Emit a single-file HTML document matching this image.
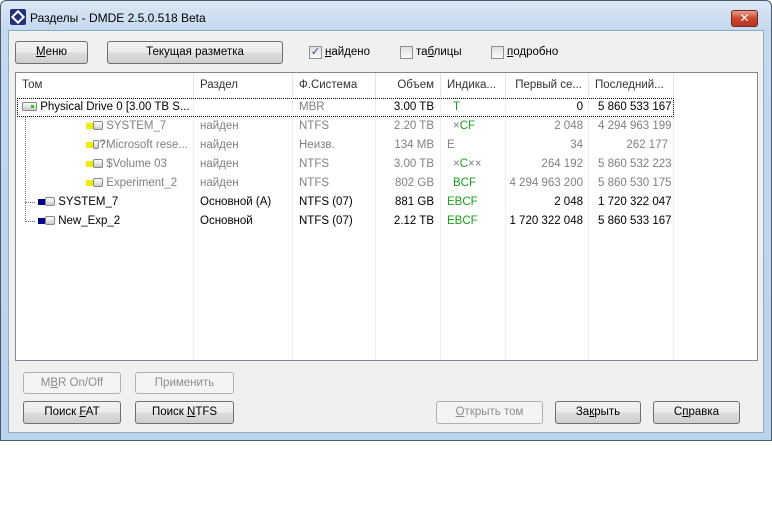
<!DOCTYPE html>
<html><head><meta charset="utf-8"><style>
*{box-sizing:border-box;margin:0;padding:0}
body{width:772px;height:518px;background:#fff;font-family:"Liberation Sans","DejaVu Sans",sans-serif;font-size:11.5px;position:relative;overflow:hidden}
.frame{position:absolute;left:0;top:0;width:772px;height:441px;background:linear-gradient(#dbe7f4,#c4d8ee 30px,#bcd3ec);border:1px solid #4a5a6c;border-radius:6px 6px 0 0}
.title{position:absolute;left:30px;top:11px;font-size:12px;color:#000}
.icon{position:absolute;left:10px;top:9px;width:16px;height:16px;background:#23307a;border-radius:2px}
.close{position:absolute;left:731px;top:10px;width:27px;height:17px;border:1px solid #6a2a22;border-radius:3px;background:linear-gradient(#e8a090,#c8452e 50%,#b83420);color:#fff;font-weight:bold;text-align:center;line-height:14px;font-size:12px}
.client{position:absolute;left:8px;top:30px;width:756px;height:403px;background:#f0f0f0;border:1px solid #8fa8c4}
.a{position:absolute}
.btn{position:absolute;height:23px;border:1px solid #707070;border-radius:3px;background:linear-gradient(#f2f2f2,#ebebeb 50%,#dddddd 51%,#cfcfcf);text-align:center;line-height:21px;font-size:11.5px;color:#000}
.btn.dis{border-color:#adb2b5;background:#f4f4f4;color:#8d8d8d}
.cb{position:absolute;width:13px;height:13px;border:1px solid #8e8f8f;background:linear-gradient(#e0e0e0,#fafafa)}
.list{position:absolute;left:15px;top:72px;width:743px;height:289px;background:#fff;border:1px solid #828790}
.hdr{position:absolute;top:0;height:25px;border-right:1px solid #e3e5e8;line-height:25px;padding:0 6px;color:#333}
.vl{position:absolute;top:25px;bottom:0;width:1px;background:#f0f0f0}
.c{position:absolute;white-space:nowrap;line-height:19px;height:19px}
.g{color:#808080}.gr{color:#18a018}
.r{text-align:right}
.drv{display:inline-block;width:15px;height:9px;border:1px solid #888;border-radius:2px;background:linear-gradient(#fff,#ccc);vertical-align:-1px;position:relative}
.sq{display:inline-block;width:7px;height:6px;vertical-align:0}
</style></head><body>
<div class="frame"></div>
<div class="icon"><div style="position:absolute;left:3px;top:3px;width:10px;height:10px;border:2px solid #fff;transform:rotate(45deg)"></div></div>
<div class="title">Разделы - DMDE 2.5.0.518 Beta</div>
<div class="close">✕</div>
<div class="client"></div>
<div class="btn" style="left:15px;top:41px;width:73px"><u>М</u>еню</div>
<div class="btn" style="left:107px;top:41px;width:176px">Текущая разметка</div>
<div class="cb" style="left:309px;top:46px;color:#2a4a9a;font-size:11px;line-height:11px;text-align:center;font-weight:bold">✓</div>
<div class="a" style="left:325px;top:46px"><u>н</u>айдено</div>
<div class="cb" style="left:400px;top:46px"></div>
<div class="a" style="left:416px;top:46px">та<u>б</u>лицы</div>
<div class="cb" style="left:491px;top:46px"></div>
<div class="a" style="left:507px;top:46px"><u>п</u>одробно</div>
<div class="list">
<div class="hdr" style="left:0;width:178px">Том</div>
<div class="hdr" style="left:178px;width:99px">Раздел</div>
<div class="hdr" style="left:277px;width:83px">Ф.Система</div>
<div class="hdr r" style="left:360px;width:65px">Объем</div>
<div class="hdr" style="left:425px;width:65px">Индика...</div>
<div class="hdr r" style="left:490px;width:83px">Первый се...</div>
<div class="hdr" style="left:573px;width:85px">Последний...</div>
<div class="vl" style="left:177px"></div><div class="vl" style="left:276px"></div><div class="vl" style="left:359px"></div><div class="vl" style="left:424px"></div><div class="vl" style="left:489px"></div><div class="vl" style="left:572px"></div><div class="vl" style="left:657px"></div>
<div class="a" style="left:1px;top:25px;width:657px;height:19px;border:1px dotted #000"></div>
<div class="a" style="left:9px;top:44px;width:0;height:105px;border-left:1px dotted #777"></div>
<div class="a" style="left:9px;top:129px;width:10px;border-top:1px dotted #777"></div>
<div class="a" style="left:9px;top:148px;width:10px;border-top:1px dotted #777"></div>
<div class="c" style="left:6px;top:25px"><span class="drv"><span style="position:absolute;left:8px;top:2px;width:3px;height:3px;background:#2c2"></span></span> Physical Drive 0 [3.00 TB S...</div>
<div class="c g" style="left:283px;top:25px">MBR</div>
<div class="c r" style="left:360px;top:25px;width:58px">3.00 TB</div>
<div class="c gr" style="left:437px;top:25px">T</div>
<div class="c r" style="left:490px;top:25px;width:77px">0</div>
<div class="c" style="left:582px;top:25px">5 860 533 167</div>

<div class="c g" style="left:70px;top:44px"><span class="sq" style="background:#ee0"></span><span class="drv" style="width:10px"></span> SYSTEM_7</div>
<div class="c g" style="left:184px;top:44px">найден</div><div class="c g" style="left:283px;top:44px">NTFS</div>
<div class="c g r" style="left:360px;top:44px;width:58px">2.20 TB</div>
<div class="c" style="left:437px;top:44px"><span class="g">×</span><span class="gr">CF</span></div>
<div class="c g r" style="left:490px;top:44px;width:77px">2 048</div><div class="c g" style="left:582px;top:44px">4 294 963 199</div>

<div class="c g" style="left:70px;top:63px"><span class="sq" style="background:#ee0"></span><span class="drv" style="width:6px"></span><b>?</b>Microsoft rese...</div>
<div class="c g" style="left:184px;top:63px">найден</div><div class="c g" style="left:283px;top:63px">Неизв.</div>
<div class="c g r" style="left:360px;top:63px;width:58px">134 MB</div>
<div class="c g" style="left:431px;top:63px">E</div>
<div class="c g r" style="left:490px;top:63px;width:77px">34</div><div class="c g r" style="left:582px;top:63px;width:70px">262 177</div>

<div class="c g" style="left:70px;top:82px"><span class="sq" style="background:#ee0"></span><span class="drv" style="width:10px"></span> $Volume 03</div>
<div class="c g" style="left:184px;top:82px">найден</div><div class="c g" style="left:283px;top:82px">NTFS</div>
<div class="c g r" style="left:360px;top:82px;width:58px">3.00 TB</div>
<div class="c" style="left:437px;top:82px"><span class="g">×</span><span class="gr">C</span><span class="g">××</span></div>
<div class="c g r" style="left:490px;top:82px;width:77px">264 192</div><div class="c g" style="left:582px;top:82px">5 860 532 223</div>

<div class="c g" style="left:70px;top:101px"><span class="sq" style="background:#ee0"></span><span class="drv" style="width:10px"></span> Experiment_2</div>
<div class="c g" style="left:184px;top:101px">найден</div><div class="c g" style="left:283px;top:101px">NTFS</div>
<div class="c g r" style="left:360px;top:101px;width:58px">802 GB</div>
<div class="c gr" style="left:437px;top:101px">BCF</div>
<div class="c g r" style="left:490px;top:101px;width:77px">4 294 963 200</div><div class="c g" style="left:582px;top:101px">5 860 530 175</div>

<div class="c" style="left:22px;top:120px"><span class="sq" style="background:#00008a"></span><span class="drv" style="width:10px"></span> SYSTEM_7</div>
<div class="c" style="left:184px;top:120px">Основной (A)</div><div class="c" style="left:283px;top:120px">NTFS (07)</div>
<div class="c r" style="left:360px;top:120px;width:58px">881 GB</div>
<div class="c gr" style="left:431px;top:120px">EBCF</div>
<div class="c r" style="left:490px;top:120px;width:77px">2 048</div><div class="c" style="left:582px;top:120px">1 720 322 047</div>

<div class="c" style="left:22px;top:139px"><span class="sq" style="background:#00008a"></span><span class="drv" style="width:10px"></span> New_Exp_2</div>
<div class="c" style="left:184px;top:139px">Основной</div><div class="c" style="left:283px;top:139px">NTFS (07)</div>
<div class="c r" style="left:360px;top:139px;width:58px">2.12 TB</div>
<div class="c gr" style="left:431px;top:139px">EBCF</div>
<div class="c r" style="left:490px;top:139px;width:77px">1 720 322 048</div><div class="c" style="left:582px;top:139px">5 860 533 167</div>
</div>
<div class="btn dis" style="left:23px;top:372px;width:98px;height:22px;line-height:20px">M<u>B</u>R On/Off</div>
<div class="btn dis" style="left:135px;top:372px;width:99px;height:22px;line-height:20px">Применить</div>
<div class="btn" style="left:23px;top:401px;width:98px">Поиск <u>F</u>AT</div>
<div class="btn" style="left:135px;top:401px;width:99px">Поиск <u>N</u>TFS</div>
<div class="btn dis" style="left:436px;top:401px;width:107px"><u>О</u>ткрыть том</div>
<div class="btn" style="left:555px;top:401px;width:86px">За<u>к</u>рыть</div>
<div class="btn" style="left:653px;top:401px;width:87px">С<u>п</u>равка</div>
</body></html>
